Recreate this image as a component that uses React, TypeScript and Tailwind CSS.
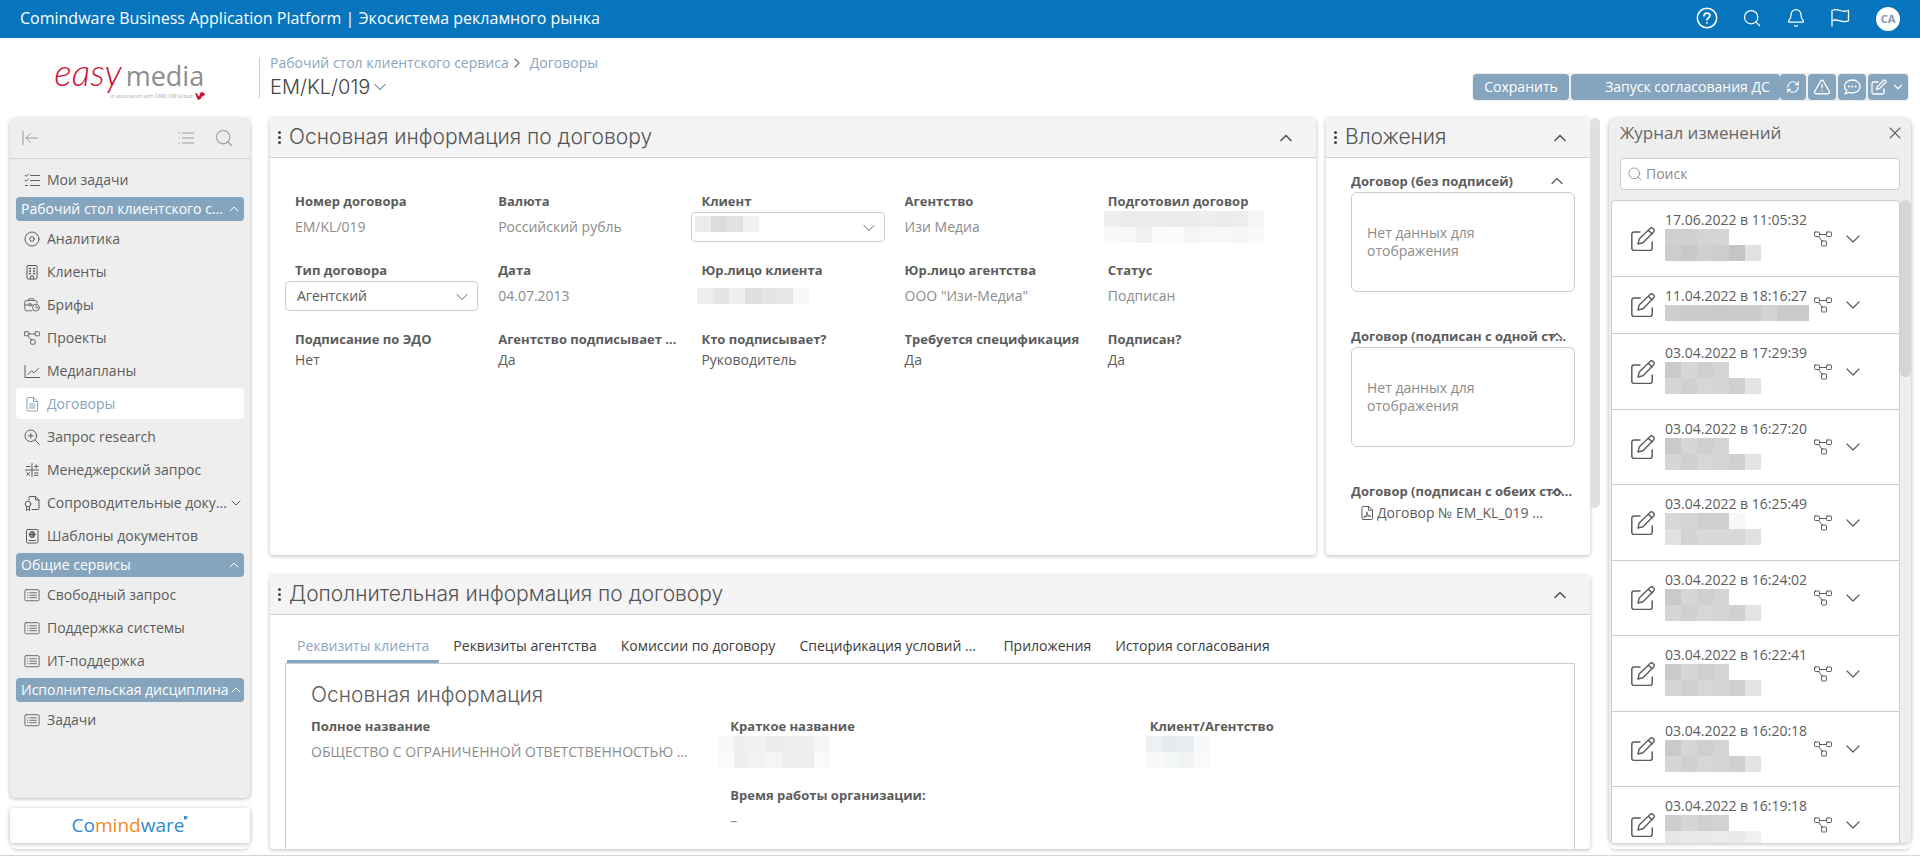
import React from "react";
import { Bell, ChevronDown, ChevronRight, ChevronUp, RefreshCw, Search, TriangleAlert, X } from "lucide-react";

type IconProps = { className?: string };

const Svg = ({ className, size = 16, children }: { className?: string; size?: number; children: React.ReactNode }) => (
  <svg
    className={className}
    viewBox={`0 0 ${size} ${size}`}
    fill="none"
    stroke="currentColor"
    strokeLinecap="round"
    strokeLinejoin="round"
    aria-hidden="true"
  >
    {children}
  </svg>
);

const NodesIcon = ({ className }: IconProps) => (
  <Svg className={className} size={18}>
    <rect x="0.5" y="2" width="5" height="4.500" rx="0.8" />
    <rect x="12.500" y="2" width="5" height="4.500" rx="0.8" />
    <rect x="7.500" y="11" width="5" height="5" rx="0.8" />
    <path d="M5.500 4.500h7M4.500 6.500L8 11" />
  </Svg>
);

const EditIcon = ({ className }: IconProps) => (
  <Svg className={className} size={24}>
    <path d="M9 5H3A2.200 2.200 0 0 0 .8 7.200v14A2.200 2.200 0 0 0 3 23.400h16a2.200 2.200 0 0 0 2.200-2.200V15" strokeWidth="1.500" />
    <path d="M7 17l1.200-5L19 1.500a2 2 0 0 1 3 0l.600.600a2 2 0 0 1 0 2.800L12 15.700 7 17zM17.500 3.300l3.600 3.600" strokeWidth="1.400" />
  </Svg>
);

const SmallEditIcon = ({ className }: IconProps) => (
  <Svg className={className}>
    <path d="M7 3H2.500A1.500 1.500 0 0 0 1 4.500v9A1.500 1.500 0 0 0 2.500 15h9a1.500 1.500 0 0 0 1.500-1.500V10" strokeWidth="1.300" />
    <path d="M5.500 10.500l.8-2.800 6.200-6.200a1.300 1.300 0 0 1 2 2L8.300 9.700z" strokeWidth="1.300" />
  </Svg>
);

const TodoIcon = ({ className }: IconProps) => (
  <Svg className={className}>
    <path d="M1 3.200l1.200 1.200L4.500 2M1 8l1.200 1.200L4.500 6.800M1.500 13.500h2M6.500 3.500h9M6.500 8.500h9M6.500 13.500h9" />
  </Svg>
);

const TargetIcon = ({ className }: IconProps) => (
  <Svg className={className}>
    <circle cx="8" cy="8" r="7" />
    <circle cx="8" cy="8" r="2.300" />
  </Svg>
);

const DocIcon = ({ className }: IconProps) => (
  <Svg className={className}>
    <path d="M9.500 1.500H4a1 1 0 0 0-1 1v11.500a1 1 0 0 0 1 1h8.500a1 1 0 0 0 1-1V5.500zM9.500 1.500v4h4M5.500 8h5.500M5.500 10h5.500M5.500 12h5.500" />
  </Svg>
);

const ZoomIcon = ({ className }: IconProps) => (
  <Svg className={className}>
    <circle cx="6.800" cy="6.800" r="5.800" />
    <path d="M11 11l4.300 4.300M6.800 4.500v4.600M4.500 6.800h4.600" />
  </Svg>
);

const ListIcon = ({ className }: IconProps) => (
  <Svg className={className}>
    <path d="M4.500 3h11M4.500 8h11M4.500 13h11M1 3h.4M1 8h.4M1 13h.4" />
  </Svg>
);

const BuildingIcon = ({ className }: IconProps) => (
  <Svg className={className}>
    <rect x="3" y="1.500" width="10" height="13.500" rx="1" />
    <path d="M6.500 15v-3h3v3" />
    <path d="M5.500 4.500h1M9.500 4.500h1M5.500 7h1M9.500 7h1M5.500 9.500h1M9.500 9.500h1" strokeWidth="1.500" />
  </Svg>
);

const BriefcaseIcon = ({ className }: IconProps) => (
  <Svg className={className} size={18}>
    <path d="M9 15.500H2.500A1.500 1.500 0 0 1 1 14V5.500A1.500 1.500 0 0 1 2.500 4H13a1.500 1.500 0 0 1 1.500 1.500V7M4.500 4l1-2h5l1 2M1 9h4M8 9h2M5.500 8v2H8V8z" />
    <circle cx="13.500" cy="12" r="3.800" />
    <path d="M13.500 10v2.200h1.800" />
  </Svg>
);

const ChartIcon = ({ className }: IconProps) => (
  <Svg className={className}>
    <path d="M1 2.500v12h14.500M4 11.500l3.500-3.700 2.500 2 4.500-4.500" />
  </Svg>
);

const MathIcon = ({ className }: IconProps) => (
  <Svg className={className}>
    <path d="M8 1.500v13M1.500 8h13M2.500 4.500h3.500M10.500 4.500H14M12.200 2.700v3.500M2.800 10.500l2.800 2.800M5.600 10.500l-2.800 2.800M10.500 11H14M10.500 13.300H14" />
  </Svg>
);

const AttachedDocIcon = ({ className }: IconProps) => (
  <Svg className={className}>
    <path d="M5 4.500V2.500a1 1 0 0 1 1-1h5.500l3.500 3.500v8.500a1 1 0 0 1-1 1H8M11.500 1.500V5H15" />
    <circle cx="4" cy="9" r="2.800" />
    <path d="M2.500 11.500v4L4 14.300l1.500 1.200v-4" />
  </Svg>
);

const TemplateIcon = ({ className }: IconProps) => (
  <Svg className={className}>
    <rect x="2.500" y="1.500" width="11.500" height="13.500" rx="1.200" />
    <circle cx="8.200" cy="6.500" r="2.900" />
    <path d="M5.300 6.500h5.800M8.200 3.600v5.800M6.900 4v5M9.500 4v5M5 12.500h6.500" />
  </Svg>
);

const ListBoxIcon = ({ className }: IconProps) => (
  <Svg className={className} size={18}>
    <rect x="1" y="3" width="16" height="12.500" rx="1.500" />
    <path d="M6.500 6.500h7.500M6.500 9.300h7.500M6.500 12h7.500" />
    <path d="M4 6.500h.3M4 9.300h.3M4 12h.3" />
  </Svg>
);

const FlagIcon = ({ className }: IconProps) => (
  <Svg className={className} size={20}>
    <path d="M2 18V2.500c3-1.500 5.500-.8 8 0s5 1.300 8.500 0v10.300c-3.500 1.300-6 .8-8.500 0s-5-1.500-8 0" strokeWidth="1.300" />
  </Svg>
);

const HelpIcon = ({ className }: IconProps) => (
  <Svg className={className} size={22}>
    <circle cx="11" cy="11" r="9.700" strokeWidth="1.500" />
    <path d="M8 8.800c0-3.600 6-3.500 6-.2 0 2.200-3 2.200-3 4.400M11 15.800v.2" strokeWidth="1.700" />
  </Svg>
);

const ChatIcon = ({ className }: IconProps) => (
  <Svg className={className} size={18}>
    <path d="M9.500 2C5 2 1.500 4.600 1.500 8.200c0 1.800.9 3.300 2.300 4.400L2 16l4-1.700c1 .3 2.200.5 3.500.5 4.500 0 7.500-2.900 7.500-6.400S14 2 9.500 2z" strokeWidth="1.300" />
    <path d="M5.800 8.500h.1M9.200 8.500h.1M12.600 8.500h.1" strokeWidth="2" />
  </Svg>
);

const PdfIcon = ({ className }: IconProps) => (
  <Svg className={className}>
    <path d="M9.500 1.500H4a1 1 0 0 0-1 1v11a1 1 0 0 0 1 1h8.500a1 1 0 0 0 1-1V5.200zM9.500 1.500v3.700h4" />
    <path d="M5 12.300c2-1 3.500-3.500 3-5.500-.8 1 .5 4 3.700 4.500-1.500-.7-4.500-.3-6.700 1z" />
  </Svg>
);

const CollapseIcon = ({ className }: IconProps) => (
  <Svg className={className}>
    <path d="M1 1.500v13M15.500 8H4M8.500 3.500L4 8l4.500 4.500" />
  </Svg>
);

// Hidden values are shown as rows of tinted 16px blocks
const Mosaic = ({ rows }: { rows: string[][] }) => (
  <div className="flex flex-col">
    {rows.map((row, i) => (
      <div key={i} className="flex">
        {row.map((color, j) => (
          <span key={j} className="h-4 w-4" style={{ backgroundColor: color }} />
        ))}
      </div>
    ))}
  </div>
);

const groups = [
  {
    title: "Рабочий стол клиентского сервиса",
    wide: false,
    items: [
      { label: "Аналитика", icon: TargetIcon },
      { label: "Клиенты", icon: BuildingIcon },
      { label: "Брифы", icon: BriefcaseIcon },
      { label: "Проекты", icon: NodesIcon },
      { label: "Медиапланы", icon: ChartIcon },
      { label: "Договоры", icon: DocIcon, active: true },
      { label: "Запрос research", icon: ZoomIcon },
      { label: "Менеджерский запрос", icon: MathIcon },
      { label: "Сопроводительные документы", icon: AttachedDocIcon, more: true },
      { label: "Шаблоны документов", icon: TemplateIcon },
    ],
  },
  {
    title: "Общие сервисы",
    wide: false,
    items: [
      { label: "Свободный запрос", icon: ListBoxIcon },
      { label: "Поддержка системы", icon: ListBoxIcon },
      { label: "ИТ-поддержка", icon: ListBoxIcon },
    ],
  },
  {
    title: "Исполнительская дисциплина",
    wide: true,
    items: [{ label: "Задачи", icon: ListBoxIcon }],
  },
];

const NavItem = ({ label, icon: Icon, active, more }: { label: string; icon: React.ElementType; active?: boolean; more?: boolean }) => (
  <a
    href="#"
    className={`my-px flex h-[31px] items-center rounded pl-2 pr-1 ${active ? "bg-white text-[#8aa5bf]" : "text-[#5c5c5c]"}`}
  >
    <Icon className="h-4 w-4 shrink-0" />
    <span className="ml-[7px] min-w-0 truncate">{label}</span>
    {more && <ChevronDown className="-mr-1 h-4 w-4 shrink-0 stroke-[1.5]" />}
  </a>
);

const Sidebar = () => (
  <aside className="flex w-[240px] shrink-0 flex-col rounded-md pb-1.5 shadow-[0_3px_3px_-1px_#0002]">
    <div className="flex min-h-0 flex-1 flex-col rounded-md bg-[#eee] shadow-[0_1px_4px_#0004]">
      <div className="flex h-[41px] items-center border-b border-[#d0d0d0] px-3 text-[#999]">
        <button type="button" aria-label="Свернуть меню">
          <CollapseIcon className="h-4 w-4" />
        </button>
        <button type="button" aria-label="Список" className="ml-auto">
          <ListIcon className="h-4 w-4" />
        </button>
        <button type="button" aria-label="Поиск по меню" className="ml-5 mr-1">
          <Search className="h-5 w-5 stroke-[1.3]" />
        </button>
      </div>
      <nav className="flex flex-col px-1.5 pt-1">
        <NavItem label="Мои задачи" icon={TodoIcon} />
        {groups.map((group) => (
          <div key={group.title} className="flex flex-col">
            <button type="button" className="mt-px mb-px flex h-6 w-full items-center rounded bg-[#85a4bd] pl-[5px] text-white">
              <span className="min-w-0 flex-1 truncate text-left font-medium">{group.title}</span>
              <ChevronUp className={`h-4 w-4 shrink-0 stroke-[1.5] ${group.wide ? "-ml-1" : "mr-0.5"}`} />
            </button>
            {group.items.map((item) => (
              <NavItem key={item.label} {...item} />
            ))}
          </div>
        ))}
      </nav>
    </div>
    <div className="mt-2.5 flex h-[35px] shrink-0 items-center justify-center rounded bg-white text-[19px] text-[#2f8bcb] shadow-[0_1px_5px_#0004]">
      <span>
        Co<span className="text-[#ef8a2b]">mind</span>ware
      </span>
      <svg className="mb-4 h-1 w-1" viewBox="0 0 4 4" fill="#2f8bcb" aria-hidden="true">
        <path d="M0 0h1.500l.5 1 1-1 1 .5-1 1 1 .5-1.500.500-1 1.500L0 3z" />
      </svg>
    </div>
  </aside>
);

const CardHeader = ({ title }: { title: string }) => (
  <div className="flex h-10 shrink-0 items-center rounded-t border-b border-[#d0d0d0] bg-[#f4f4f4] pl-2 pr-5 text-[#555]">
    <span className="mr-2 flex flex-col gap-0.5" aria-hidden="true">
      <i className="h-[3px] w-[3px] rounded-full bg-[#444]" />
      <i className="h-[3px] w-[3px] rounded-full bg-[#444]" />
      <i className="h-[3px] w-[3px] rounded-full bg-[#444]" />
    </span>
    <h2 className="pb-0.5 font-[Inter,sans-serif] text-[21px] font-light">{title}</h2>
    <button type="button" aria-label={`Свернуть: ${title}`} className="ml-auto">
      <ChevronUp className="h-5 w-5 stroke-2" />
    </button>
  </div>
);

const cardClass = "flex flex-col rounded bg-white shadow-[0_1px_4px_#0004]";
const labelClass = "block h-[18px] truncate text-[13px] leading-[18px] font-bold text-[#5c5c5c]";

const Field = ({ label, children, plain }: { label: string; children: React.ReactNode; plain?: boolean }) => (
  <div className="h-[69px] min-w-0 px-2.5">
    <div className={labelClass}>{label}</div>
    <div className={`flex items-center ${plain ? "h-[23px] text-[#5c5c5c]" : "mt-0.5 h-[30px] text-[#8c8c8c]"}`}>
      {children}
    </div>
  </div>
);

const SelectField = ({ id, label, value, children }: { id: string; label: string; value: string; children?: React.ReactNode }) => (
  <div className="h-[69px] min-w-0 px-2.5">
    <label htmlFor={id} className={labelClass}>
      {label}
    </label>
    <div className="relative mt-0.5 -ml-2.5">
      <select
        id={id}
        className="h-[30px] w-full appearance-none rounded border border-[#ccc] bg-white pl-[11px] text-[#5c5c5c]"
      >
        <option>{value}</option>
      </select>
      <ChevronDown className="pointer-events-none absolute top-1.5 right-1.5 h-5 w-5 stroke-[1.2] text-[#666]" />
      {children && <div className="pointer-events-none absolute top-1 left-1">{children}</div>}
    </div>
  </div>
);

const MainInfo = () => (
  <section className={`${cardClass} min-w-0 flex-1`}>
    <CardHeader title="Основная информация по договору" />
    <div className="grid grid-cols-5 px-[15px] pt-[34px]">
      <Field label="Номер договора">EM/KL/019</Field>
      <Field label="Валюта">Российский рубль</Field>
      <SelectField id="client" label="Клиент" value="">
        <Mosaic rows={[["#ebebeb", "#dcdcdc", "#e2e2e2", "#f1f1f1"]]} />
      </SelectField>
      <Field label="Агентство">Изи Медиа</Field>
      <Field label="Подготовил договор">
        <div className="-ml-1">
          <Mosaic
            rows={[
              ["#efefef", "#ebebeb", "#ebebeb", "#ececec", "#ebebeb", "#ececec", "#eeeeee", "#ebebeb", "#ededed", "#f5f5f5"],
              ["#f9f9f9", "#f7f7f7", "#f0f0f0", "#fafafa", "#fbfbfb", "#f5f5f5", "#f7f7f7", "#f8f8f8", "#f5f5f5", "#f9f9f9"],
            ]}
          />
        </div>
      </Field>
      <SelectField id="contract-type" label="Тип договора" value="Агентский" />
      <Field label="Дата">04.07.2013</Field>
      <Field label="Юр.лицо клиента">
        <div className="-ml-1">
          <Mosaic rows={[["#ededed", "#e5e5e5", "#eeeeee", "#dfdfdf", "#e4e4e4", "#e6e6e6", "#f9f9f9"]]} />
        </div>
      </Field>
      <Field label="Юр.лицо агентства">ООО "Изи-Медиа"</Field>
      <Field label="Статус">Подписан</Field>
      <Field plain label="Подписание по ЭДО">Нет</Field>
      <Field plain label="Агентство подписывает первым">Да</Field>
      <Field plain label="Кто подписывает?">Руководитель</Field>
      <Field plain label="Требуется спецификация">Да</Field>
      <Field plain label="Подписан?">Да</Field>
    </div>
  </section>
);

const Attachment = ({ title, children }: { title: string; children: React.ReactNode }) => (
  <div className="relative h-[155px]">
    <div className={`${labelClass} w-[222px]`}>{title}</div>
    <button type="button" aria-label={`Свернуть: ${title}`} className="absolute -top-px right-2 text-[#555]">
      <ChevronUp className="h-5 w-5 stroke-[1.3]" />
    </button>
    {children}
  </div>
);

const EmptyBox = () => (
  <div className="mt-0.5 flex h-[100px] items-center rounded-md border border-[#ccc] px-[15px] leading-[18px] text-[#8c8c8c]">
    <p className="w-[150px]">Нет данных для отображения</p>
  </div>
);

const Attachments = () => (
  <section className={`${cardClass} w-[264px] shrink-0 overflow-hidden`}>
    <CardHeader title="Вложения" />
    <div className="pt-3.5 pr-[15px] pl-[25px]">
      <Attachment title="Договор (без подписей)">
        <EmptyBox />
      </Attachment>
      <Attachment title="Договор (подписан с одной стороны)">
        <EmptyBox />
      </Attachment>
      <Attachment title="Договор (подписан с обеих сторон)">
        <a href="#" className="mt-[3px] flex items-center pl-2 text-[#5c5c5c]">
          <PdfIcon className="mr-0.5 h-4 w-4 shrink-0" />
          <span className="w-[172px] truncate">Договор № EM_KL_019 подписан</span>
        </a>
      </Attachment>
    </div>
  </section>
);

const tabs = [
  "Реквизиты клиента",
  "Реквизиты агентства",
  "Комиссии по договору",
  "Спецификация условий договора",
  "Приложения",
  "История согласования",
];

const ExtraInfo = () => (
  <section className={`${cardClass} min-h-0 flex-1`}>
    <CardHeader title="Дополнительная информация по договору" />
    <div className="mt-4 flex gap-1 pl-[17px]" role="tablist">
      {tabs.map((tab, i) => (
        <button
          key={tab}
          type="button"
          role="tab"
          aria-selected={i === 0}
          className={`h-8 max-w-[200px] truncate border-b-[3px] px-2.5 ${
            i === 0 ? "border-[#85a4bd] text-[#8aa5bf]" : "border-transparent text-[#3c3c3c]"
          }`}
        >
          {tab}
        </button>
      ))}
    </div>
    <div className="mx-[15px] min-h-0 flex-1 border border-b-0 border-[#ccc] px-[15px] pt-[15px]">
      <h3 className="px-2.5 font-[Inter,sans-serif] text-[21px] leading-8 font-light text-[#5c5c5c]">Основная информация</h3>
      <div className="mt-1.5 grid grid-cols-3">
        <Field label="Полное название">
          <span className="max-w-[382px] truncate">ОБЩЕСТВО С ОГРАНИЧЕННОЙ ОТВЕТСТВЕННОСТЬЮ КЛИЕНТ</span>
        </Field>
        <Field label="Краткое название">
          <div className="-ml-3">
            <Mosaic
              rows={[
                ["#f9f9f9", "#efefef", "#f1f1f1", "#ececec", "#ededed", "#eeeeee", "#f5f5f5"],
                ["#fafafa", "#efefef", "#f2f2f2", "#f5f5f5", "#efefef", "#eeeeee", "#fafafa"],
              ]}
            />
          </div>
        </Field>
        <Field label="Клиент/Агентство">
          <div className="-ml-1">
            <Mosaic
              rows={[
                ["#edf1f3", "#e6ebee", "#e8eef0", "#f6f8fa"],
                ["#f8f9fa", "#f5f6f7", "#f0f4f4", "#fafafa"],
              ]}
            />
          </div>
        </Field>
        <div />
        <Field label="Время работы организации:">–</Field>
      </div>
    </div>
  </section>
);

const twoLine = [
  ["#cacaca", "#d6d6d6", "#cfcfcf", "#d4d4d4"],
  ["#d6d6d6", "#d0d0d0", "#d7d7d7", "#d5d5d5", "#d0d0d0", "#e4e4e4"],
];

const history = [
  { date: "17.06.2022 в 11:05:32", rows: [["#d0d0d0", "#d0d0d0", "#d4d4d4", "#d4d4d4"], ["#cdcdcd", "#c8c8c8", "#cfcfcf", "#cdcdcd", "#c5c5c5", "#e1e1e1"]] },
  { date: "11.04.2022 в 18:16:27", rows: [["#cecece", "#cbcbcb", "#cbcbcb", "#cacaca", "#cccccc", "#cbcbcb", "#d3d3d3", "#cacaca", "#cacaca"]] },
  { date: "03.04.2022 в 17:29:39", rows: twoLine },
  { date: "03.04.2022 в 16:27:20", rows: twoLine },
  { date: "03.04.2022 в 16:25:49", rows: [["#d7d7d7", "#d5d5d5", "#cfcfcf", "#d0d0d0", "#f8f8f8"], ["#e1e1e1", "#d2d2d2", "#d8d8d8", "#d8d8d8", "#d8d8d8", "#e1e1e1"]] },
  { date: "03.04.2022 в 16:24:02", rows: twoLine },
  { date: "03.04.2022 в 16:22:41", rows: twoLine },
  { date: "03.04.2022 в 16:20:18", rows: twoLine },
  { date: "03.04.2022 в 16:19:18", rows: [["#cecece", "#d6d6d6", "#d0d0d0", "#d3d3d3"], ["#e6e6e8", "#e9e9ea", "#e8e8ea", "#ebebec", "#e9e9ea", "#f0f0f0"]] },
];

const Journal = () => (
  <aside className="flex w-[302px] shrink-0 flex-col rounded-md pb-1.5 shadow-[0_3px_3px_-1px_#0002]">
    <div className="flex min-h-0 flex-1 flex-col overflow-hidden rounded-md bg-[#eee] shadow-[0_1px_4px_#0004]">
      <div className="flex h-10 shrink-0 items-center justify-between pr-1.5 pb-2.5 pl-[11px] text-[#666]">
        <h2 className="text-[17px]">Журнал изменений</h2>
        <button type="button" aria-label="Закрыть">
          <X className="h-5 w-5 stroke-[1.3]" />
        </button>
      </div>
      <div className="mr-[11px] ml-[11px] flex h-8 shrink-0 items-center rounded border border-[#ccc] bg-white px-1.5">
        <Search className="h-4 w-4 text-[#999] stroke-[1.5]" />
        <input type="search" aria-label="Поиск" placeholder="Поиск" className="ml-[3px] min-w-0 flex-1 outline-none placeholder:text-[#8c8c8c]" />
      </div>
      <div className="mt-2.5 flex min-h-0 flex-1">
        <ul className="ml-0.5 min-w-0 flex-1 overflow-hidden rounded-t border border-b-0 border-[#ccc] bg-white text-[#5c5c5c]">
          {history.map((entry) => (
            <li
              key={entry.date}
              className={`flex items-center border-b border-[#ccc] pl-[19px] ${
                entry.rows.length > 1 ? "odd:h-[76px] even:h-[75px]" : "h-[57px]"
              }`}
            >
              <EditIcon className="h-6 w-6 shrink-0" />
              <div className="ml-2.5 h-full w-[149px] pt-2.5 leading-[18px]">
                <div>{entry.date}</div>
                <Mosaic rows={entry.rows} />
              </div>
              <button type="button" aria-label="Показать процесс">
                <NodesIcon className="h-[18px] w-[18px]" />
              </button>
              <button type="button" aria-label="Развернуть" className="ml-[9px]">
                <ChevronDown className="h-6 w-6 stroke-[1.2]" />
              </button>
            </li>
          ))}
        </ul>
        <div className="w-[11px] shrink-0">
          <div className="h-[177px] rounded-full bg-[#d5d5d5]" />
        </div>
      </div>
    </div>
  </aside>
);

const toolButton = "flex h-[26px] items-center justify-center rounded bg-[#85a4bd] text-white";

const TitleBar = () => (
  <div className="flex h-20 shrink-0">
    <div className="flex w-[259px] items-center justify-center">
      <div className="flex items-baseline">
        <span className="font-[Lato,sans-serif] text-[37px] leading-8 font-light text-[#cf1238] italic">easy</span>
        <div className="ml-1 w-[79px]">
          <div className="text-[27px] leading-6 text-[#8c8c8c]">media</div>
          <div className="mt-1 -ml-2 flex h-2 items-center justify-end text-[5px] leading-2 whitespace-nowrap text-[#aaa]">
            in association with OMD OM Group
            <svg className="ml-0.5 h-2 w-2.5 shrink-0" viewBox="0 0 10 8" fill="#cf1238" aria-hidden="true">
              <path d="M0 1l2 .5L3.500 4 5 3V1l2-1 3 1.500L9 4 7 4.500 5.500 7 3 8 1.500 5z" />
            </svg>
          </div>
        </div>
      </div>
    </div>
    <div className="my-5 flex flex-col border-l border-[#ccc] pl-2.5">
      <nav className="-mt-[5px] flex items-center text-[#8aa5bf]">
        <a href="#">Рабочий стол клиентского сервиса</a>
        <ChevronRight className="mr-[5px] h-4 w-4 stroke-2 text-[#777]" />
        <a href="#">Договоры</a>
      </nav>
      <h1 className="flex items-center font-[Inter,sans-serif] text-xl font-light text-[#444]">
        EM/KL/019
        <ChevronDown className="h-5 w-5 stroke-[1.5] text-[#85a4bd]" />
      </h1>
    </div>
    <div className="mt-[35px] mr-[11px] ml-auto flex h-7 gap-0.5 rounded bg-[#eee] p-px">
      <button type="button" className={`${toolButton} w-24`}>Сохранить</button>
      <div className="flex">
        <button type="button" className={`${toolButton} w-[209px] pl-6`}>Запуск согласования ДС</button>
        <button type="button" aria-label="Обновить" className={`${toolButton} w-[26px]`}>
          <RefreshCw className="h-[14px] w-[14px] stroke-2" />
        </button>
      </div>
      <button type="button" aria-label="Предупреждения" className={`${toolButton} w-7`}>
        <TriangleAlert className="h-[18px] w-[18px] stroke-[1.8]" />
      </button>
      <button type="button" aria-label="Комментарии" className={`${toolButton} w-7`}>
        <ChatIcon className="h-[18px] w-[18px]" />
      </button>
      <button type="button" aria-label="Действия" className={`${toolButton} w-10`}>
        <SmallEditIcon className="h-4 w-4" />
        <ChevronDown className="ml-1 h-3.5 w-3.5 stroke-2" />
      </button>
    </div>
  </div>
);

export default function App() {
  return (
    <div className="flex h-screen flex-col overflow-hidden border-b border-[#ccd6e3] bg-white font-['Open_Sans','Noto_Sans',sans-serif] text-sm">
      <header className="flex h-[38px] shrink-0 items-center bg-[#0675be] pr-5 pl-5 text-white">
        <span className="pb-0.5 text-base">Comindware Business Application Platform | Экосистема рекламного рынка</span>
        <div className="mr-[26px] ml-auto flex items-center gap-6 pb-0.5">
          <button type="button" aria-label="Справка">
            <HelpIcon className="h-[22px] w-[22px]" />
          </button>
          <button type="button" aria-label="Поиск">
            <Search className="h-5 w-5 stroke-[1.5]" />
          </button>
          <button type="button" aria-label="Уведомления">
            <Bell className="h-5 w-5 stroke-[1.5]" />
          </button>
          <button type="button" aria-label="Флаг">
            <FlagIcon className="h-5 w-5" />
          </button>
        </div>
        <button type="button" className="h-6 w-6 rounded-full bg-white text-[11px] font-bold text-[#7d97ad]">
          CA
        </button>
      </header>
      <TitleBar />
      <div className="flex min-h-0 flex-1 pr-[9px] pb-1.5 pl-2.5">
        <Sidebar />
        <main className="ml-5 flex min-w-0 flex-1 flex-col gap-5">
          <div className="flex h-[437px] shrink-0 gap-2.5">
            <MainInfo />
            <Attachments />
          </div>
          <ExtraInfo />
        </main>
        <div className="mr-[9px] h-[390px] w-2.5 shrink-0 rounded-full bg-[#e0e0e0]" />
        <Journal />
      </div>
    </div>
  );
}
